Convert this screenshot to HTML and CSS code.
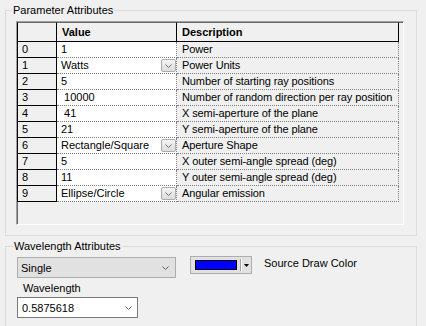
FILE: index.html
```html
<!DOCTYPE html>
<html lang="en">
<head>
  <meta charset="UTF-8">
  <meta name="viewport" content="width=device-width, initial-scale=1.0">
  <title>Source Properties</title>
  <link rel="stylesheet" href="styles.css">
</head>
<body>
  <fieldset class="group group-params">
    <legend>Parameter Attributes</legend>
    <div class="grid">
      <div class="grid-row grid-head">
        <div class="cell rowhead"></div>
        <div class="cell">Value</div>
        <div class="cell">Description</div>
      </div>
      <div class="grid-row">
        <div class="cell rowhead">0</div>
        <div class="cell value">1</div>
        <div class="cell desc">Power</div>
      </div>
      <div class="grid-row">
        <div class="cell rowhead">1</div>
        <div class="cell value combo">Watts
          <span class="drop-btn"><svg width="7" height="4" viewBox="0 0 7 4"><polyline points="0.5,0.5 3.5,3.5 6.5,0.5" fill="none" stroke="#707070"/></svg></span>
        </div>
        <div class="cell desc">Power Units</div>
      </div>
      <div class="grid-row">
        <div class="cell rowhead">2</div>
        <div class="cell value">5</div>
        <div class="cell desc">Number of starting ray positions</div>
      </div>
      <div class="grid-row">
        <div class="cell rowhead">3</div>
        <div class="cell value">&nbsp;10000</div>
        <div class="cell desc">Number of random direction per ray position</div>
      </div>
      <div class="grid-row">
        <div class="cell rowhead">4</div>
        <div class="cell value">&nbsp;41</div>
        <div class="cell desc">X semi-aperture of the plane</div>
      </div>
      <div class="grid-row">
        <div class="cell rowhead">5</div>
        <div class="cell value">21</div>
        <div class="cell desc">Y semi-aperture of the plane</div>
      </div>
      <div class="grid-row">
        <div class="cell rowhead">6</div>
        <div class="cell value combo">Rectangle/Square
          <span class="drop-btn"><svg width="7" height="4" viewBox="0 0 7 4"><polyline points="0.5,0.5 3.5,3.5 6.5,0.5" fill="none" stroke="#707070"/></svg></span>
        </div>
        <div class="cell desc">Aperture Shape</div>
      </div>
      <div class="grid-row">
        <div class="cell rowhead">7</div>
        <div class="cell value">5</div>
        <div class="cell desc">X outer semi-angle spread (deg)</div>
      </div>
      <div class="grid-row">
        <div class="cell rowhead">8</div>
        <div class="cell value">11</div>
        <div class="cell desc">Y outer semi-angle spread (deg)</div>
      </div>
      <div class="grid-row">
        <div class="cell rowhead">9</div>
        <div class="cell value combo">Ellipse/Circle
          <span class="drop-btn"><svg width="7" height="4" viewBox="0 0 7 4"><polyline points="0.5,0.5 3.5,3.5 6.5,0.5" fill="none" stroke="#707070"/></svg></span>
        </div>
        <div class="cell desc">Angular emission</div>
      </div>
    </div>
  </fieldset>

  <fieldset class="group group-wave">
    <legend>Wavelength Attributes</legend>
    <div class="wave-row">
      <div class="combo-box">
        <span>Single</span>
        <svg width="7" height="4" viewBox="0 0 7 4"><polyline points="0.5,0.5 3.5,3.5 6.5,0.5" fill="none" stroke="#606060"/></svg>
      </div>
      <div class="color-btn">
        <span class="swatch"></span>
        <span class="sep"></span>
        <svg class="tri" width="5" height="3" viewBox="0 0 5 3"><polygon points="0,0 5,0 2.5,3" fill="#000"/></svg>
      </div>
      <span class="color-label">Source Draw Color</span>
    </div>
    <div class="wave-label">Wavelength</div>
    <div class="combo-box combo-white">
      <span>0.5875618</span>
      <svg width="7" height="4" viewBox="0 0 7 4"><polyline points="0.5,0.5 3.5,3.5 6.5,0.5" fill="none" stroke="#606060"/></svg>
    </div>
  </fieldset>
</body>
</html>
```

FILE: styles.css
```css
body {
  margin: 0;
  width: 426px;
  height: 326px;
  overflow: hidden;
  background-color: #f0f0f0;
  font-family: "Liberation Sans", Arial, sans-serif;
  font-size: 11px;
  color: #000;
}

/* group boxes */
.group {
  margin: 3px 9px 0 5px;
  border: 1px solid #dcdcdc;
  min-width: 0;
}

.group legend {
  font-size: 11px;
  line-height: 14px;
  padding: 0 1px;
  margin-left: -4px;
}

.group-params {
  padding: 4px 12px 10px 10px;
}

/* the lower box runs on past the window edge */
.group-wave {
  padding: 4px 12px 8px 11px;
  border-bottom: none;
}

/* parameter grid */
.grid {
  width: 388px;
  height: 204px;
  box-sizing: border-box;
  border: 1px solid;
  border-color: #a0a0a0 #fff #fff #a0a0a0;
  box-shadow: inset 1px 1px 0 #696969;
}

.grid-row {
  display: grid;
  grid-template-columns: 40px 120px 222px;
  height: 16px;
}

.cell {
  box-sizing: border-box;
  padding-left: 4px;
  line-height: 15px;
  white-space: nowrap;
  overflow: hidden;
}

.rowhead {
  border-left: 1px solid #000;
  border-right: 1px solid #000;
  border-bottom: 1px solid #000;
}

.value {
  background-color: #fff;
  border-right: 1px dotted #808080;
  border-bottom: 1px dotted #808080;
}

.desc {
  padding-left: 5px;
  letter-spacing: -0.1px;
  border-right: 1px dotted #808080;
  border-bottom: 1px dotted #808080;
}

.grid-head {
  height: 20px;
}

.grid-head .cell {
  font-weight: bold;
  line-height: 18px;
  border-top: 1px solid #696969;
  border-right: 1px solid #000;
  border-bottom: 1px solid #000;
}

.grid-head .cell + .cell {
  padding-left: 5px;
}

.combo {
  display: flex;
  justify-content: space-between;
  align-items: center;
}

.drop-btn {
  width: 15px;
  height: 13px;
  box-sizing: border-box;
  border: 1px solid #acacac;
  border-radius: 2px;
  background: linear-gradient(#f4f4f4, #dcdcdc);
  display: flex;
  align-items: center;
  justify-content: center;
}

/* wavelength section */
.wave-row {
  display: flex;
  align-items: flex-start;
}

.combo-box {
  width: 159px;
  height: 21px;
  box-sizing: border-box;
  border: 1px solid #adadad;
  background-color: #e1e1e1;
  padding: 0 6px 0 3px;
  display: flex;
  align-items: center;
  justify-content: space-between;
}

.combo-white {
  width: 121px;
  margin-top: 2px;
  background-color: #fff;
  border-color: #7a7a7a;
  padding: 0 5px 0 4px;
}

.color-btn {
  width: 62px;
  height: 18px;
  box-sizing: border-box;
  margin: -1px 0 0 14px;
  padding-left: 4px;
  border: 1px solid #adadad;
  background-color: #e1e1e1;
  display: flex;
  align-items: center;
}

.swatch {
  width: 42px;
  height: 10px;
  box-sizing: border-box;
  border: 1px solid #000;
  background-color: #0000ff;
}

.sep {
  width: 1px;
  height: 12px;
  margin-left: 3px;
  background-color: #a0a0a0;
  border-right: 1px solid #fff;
}

.tri {
  margin-left: 2px;
}

.color-label {
  margin: -1px 0 0 12px;
  line-height: 14px;
}

.wave-label {
  margin: 3px 0 0 6px;
  line-height: 14px;
}
```
